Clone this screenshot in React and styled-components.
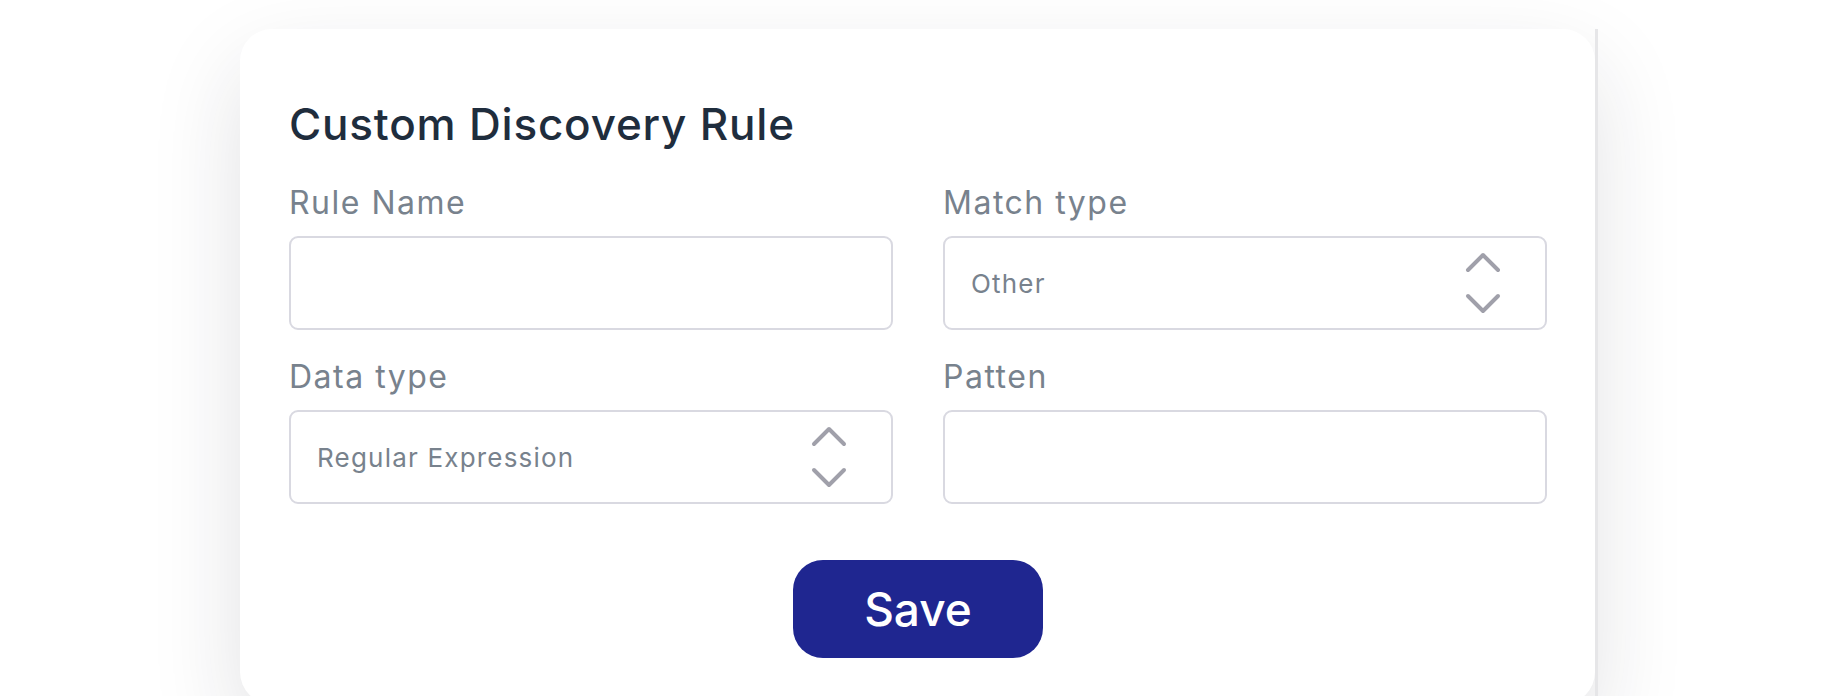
import React from 'react'
import styled, { createGlobalStyle } from 'styled-components'

const color = {
  title: '#1f2d3d',
  label: '#78828d',
  border: '#d9d9e1',
  chevron: '#a0a0aa',
  button: '#1f2690',
}

const GlobalStyle = createGlobalStyle`
  html, body {
    margin: 0;
    height: 696px;
    overflow: hidden;
    background: #ffffff;
  }
  * {
    box-sizing: border-box;
  }
`

const Page = styled.div`
  padding: 29px 0 0 240px;
  font-family: Inter, 'Liberation Sans', sans-serif;
`

const Card = styled.div`
  position: relative;
  width: 1355px;
  height: 675px;
  padding: 69px 48px 0 49px;
  background: #ffffff;
  border-radius: 32px;
  box-shadow: 0 36px 90px rgba(30, 30, 50, 0.13);

  &::after {
    content: '';
    position: absolute;
    top: 0;
    bottom: 0;
    right: -3px;
    width: 3px;
    background: #e6e6e8;
  }
`

const Title = styled.h2`
  margin: 0 0 36px;
  font-size: 44px;
  line-height: 52px;
  font-weight: 500;
  color: ${color.title};
  letter-spacing: 0.8px;
`

const Grid = styled.div`
  display: grid;
  grid-template-columns: 1fr 1fr;
  column-gap: 50px;
  row-gap: 30px;
`

const Field = styled.div`
  display: flex;
  flex-direction: column;
  gap: 16px;
`

const Label = styled.label`
  font-size: 32px;
  line-height: 34px;
  color: ${color.label};
  font-weight: 400;
  letter-spacing: 1.5px;
`

const Box = styled.div`
  display: flex;
  align-items: center;
  justify-content: space-between;
  height: 94px;
  padding: 0 44px 0 26px;
  border: 2px solid ${color.border};
  border-radius: 9px;
  font-size: 26px;
  letter-spacing: 1.2px;
  color: ${color.label};
`

const Chevrons = styled.svg`
  width: 36px;
  height: 62px;
  flex: none;
`

const Footer = styled.div`
  display: flex;
  justify-content: center;
  padding-top: 56px;
`

const SaveButton = styled.button`
  width: 250px;
  height: 98px;
  border: none;
  border-radius: 30px;
  background: ${color.button};
  color: #ffffff;
  font-family: inherit;
  font-size: 46px;
  font-weight: 500;
  cursor: pointer;
`

const Select = ({ value }) => (
  <Box>
    <span>{value}</span>
    <Chevrons viewBox="0 0 36 62" fill="none" stroke={color.chevron} strokeWidth="4" strokeLinecap="round" strokeLinejoin="round">
      <path d="M3 18 L18 3 L33 18" />
      <path d="M3 44 L18 59 L33 44" />
    </Chevrons>
  </Box>
)

const App = () => (
  <>
    <GlobalStyle />
    <Page>
      <Card>
        <Title>Custom Discovery Rule</Title>
        <Grid>
          <Field>
            <Label>Rule Name</Label>
            <Box />
          </Field>
          <Field>
            <Label>Match type</Label>
            <Select value="Other" />
          </Field>
          <Field>
            <Label>Data type</Label>
            <Select value="Regular Expression" />
          </Field>
          <Field>
            <Label>Patten</Label>
            <Box />
          </Field>
        </Grid>
        <Footer>
          <SaveButton>Save</SaveButton>
        </Footer>
      </Card>
    </Page>
  </>
)

export default App
